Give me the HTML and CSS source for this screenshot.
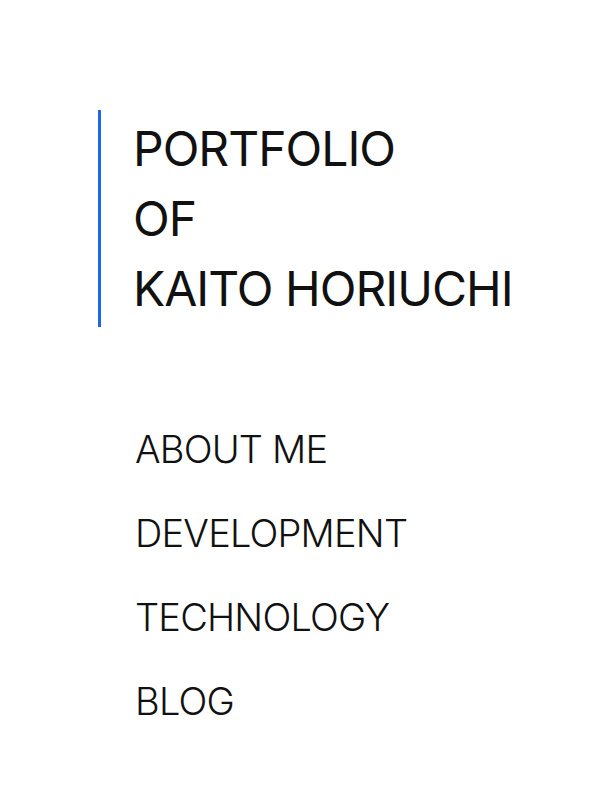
FILE: index.html
```html
<!DOCTYPE html>
<html lang="en">
<head>
<meta charset="utf-8">
<link rel="stylesheet" href="styles.css">
<title>Portfolio of Kaito Horiuchi</title>
</head>
<body>
<main class="page">
  <h1 class="title">
    <span class="title-line">PORTFOLIO</span>
    <span class="title-line">OF</span>
    <span class="title-line">KAITO HORIUCHI</span>
  </h1>
  <nav class="menu">
    <a class="menu-item" href="#about">ABOUT ME</a>
    <a class="menu-item" href="#development">DEVELOPMENT</a>
    <a class="menu-item" href="#technology">TECHNOLOGY</a>
    <a class="menu-item" href="#blog">BLOG</a>
  </nav>
</main>
</body>
</html>
```
FILE: styles.css
```css
html, body {
  margin: 0;
  padding: 0;
  background: #ffffff;
}
body {
  font-family: "Inter", "Noto Sans", sans-serif;
  color: #111111;
}
.page {
  padding: 110px 0 0 98px;
}
.title {
  margin: 0;
  border-left: 3px solid #1f66e5;
  padding: 4px 0 3px 32px;
  font-size: 48px;
  font-weight: 400;
  line-height: 70px;
  letter-spacing: -1px;
  display: flex;
  flex-direction: column;
}
.title-line {
  display: block;
  white-space: nowrap;
}
.menu {
  display: flex;
  flex-direction: column;
  padding: 80px 0 0 37px;
}
.menu-item {
  display: block;
  color: #111111;
  text-decoration: none;
  font-size: 38px;
  font-weight: 350;
  letter-spacing: -0.8px;
  line-height: 84px;
}
```
